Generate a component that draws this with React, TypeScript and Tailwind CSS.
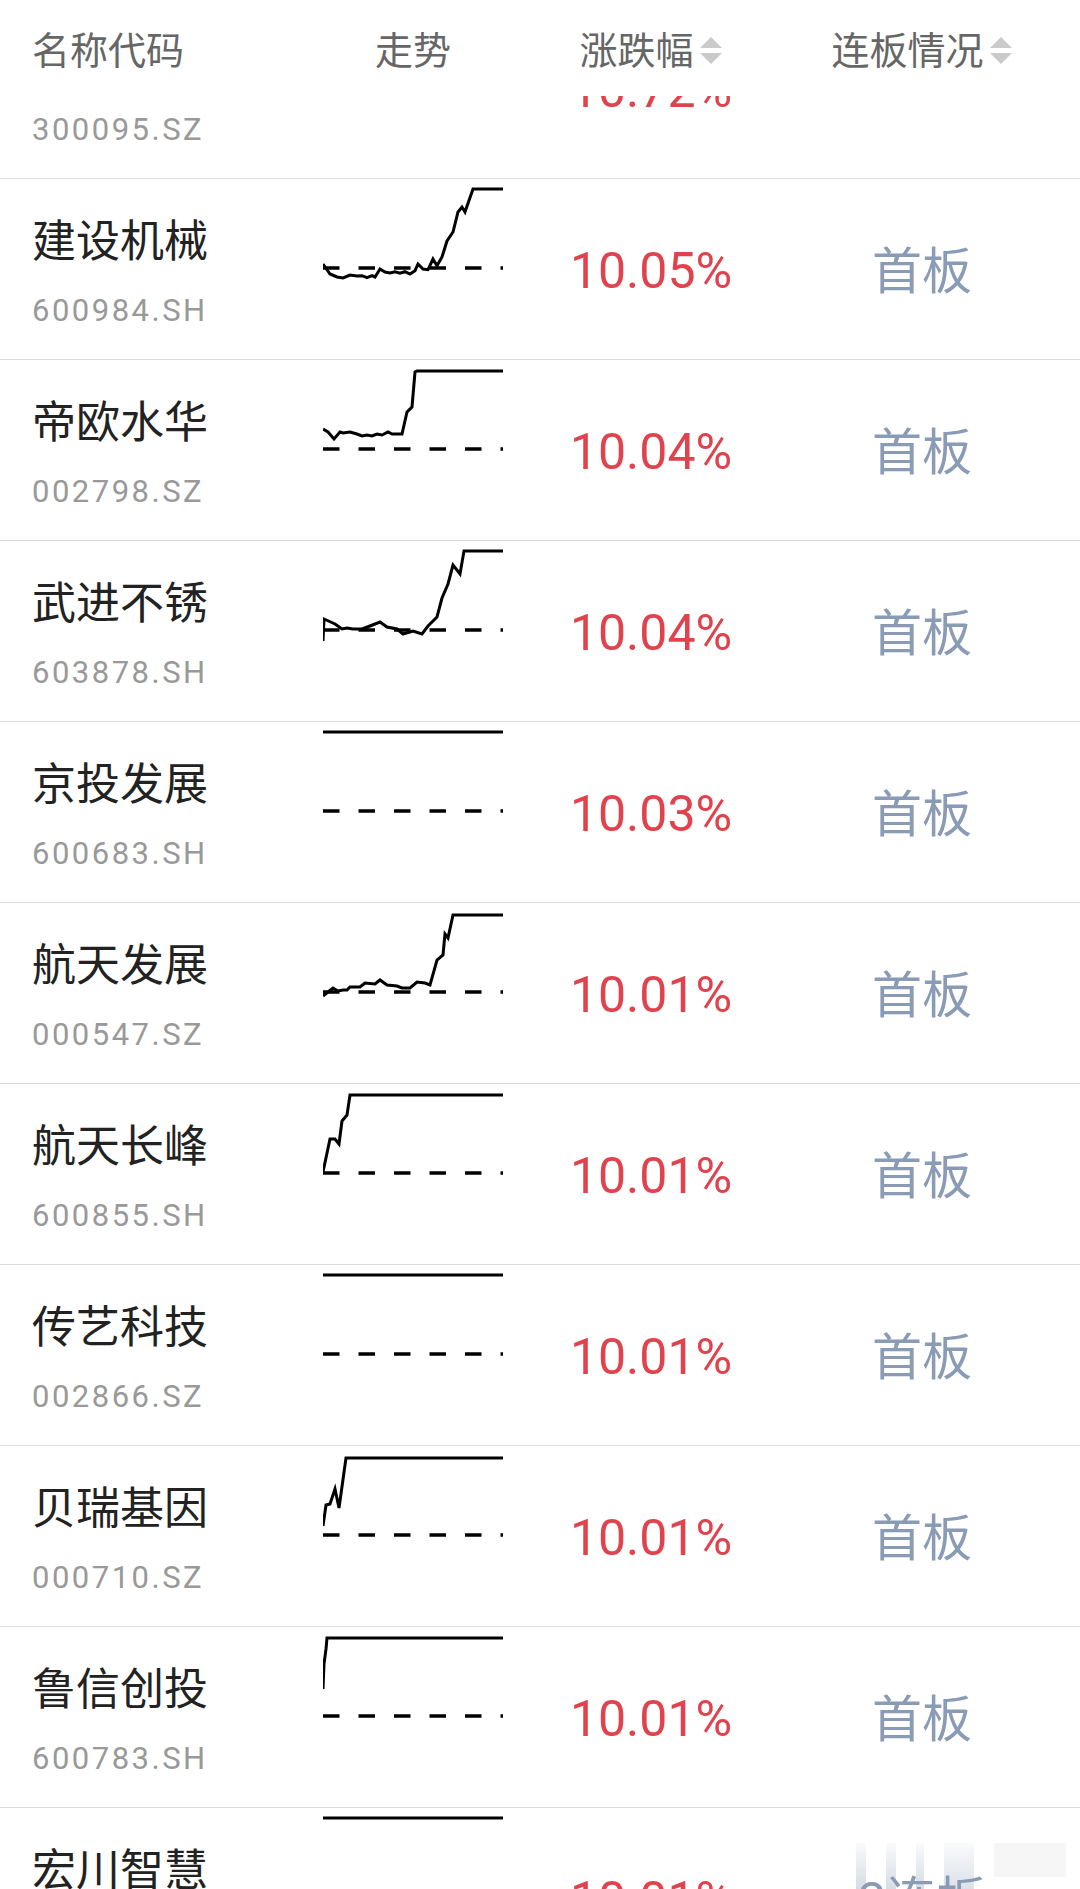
import React from 'react';

type Row = {
  name: string;
  code: string;
  pct: string;
  status: string;
  line: string | null;
};

const FLAT = '0,10 180,10';

const rows: Row[] = [
  { name: '', code: '300095.SZ', pct: '10.72%', status: '', line: null },
  {
    name: '建设机械',
    code: '600984.SH',
    pct: '10.05%',
    status: '首板',
    line: '0,85 7,95 14,98 20,99 27,96 34,97 39,96.7 44,98.7 49,96.7 52,98 57,90 62,93 67,94 72,92.7 77,94.3 82,92.7 87,95 92,91.7 95,85 100,90 105,90.7 110,80 114,86.7 119,78 124,62 130,53 135,33 139,28 142,33 150,10 180,10',
  },
  {
    name: '帝欧水华',
    code: '002798.SZ',
    pct: '10.04%',
    status: '首板',
    line: '0,69 5,72 11,79 17,72 20,73 27,72 34,74 39,76 44,75 49,76 54,74 59,75 65,72 69,74 79,74 84,52 89,47 92,12 94,11 180,11',
  },
  {
    name: '武进不锈',
    code: '603878.SH',
    pct: '10.04%',
    status: '首板',
    line: '0,100 1,78 12,83 19,88 24,87 30,88 39,88 47,85 57,81 64,86 74,88 80,93 90,90 99,93 105,85 114,76 119,57 125,43 130,24 137,33 141,10 180,10',
  },
  { name: '京投发展', code: '600683.SH', pct: '10.03%', status: '首板', line: FLAT },
  {
    name: '航天发展',
    code: '000547.SZ',
    pct: '10.01%',
    status: '首板',
    line: '0,93 5,89 10,85 15,88 20,87 24,87 27,84 37,84 42,80 52,81 57,77 64,82 74,83 79,85 87,85 94,79 102,80 107,82 114,57 120,52 122,31 125,35 130,12 180,12',
  },
  {
    name: '航天长峰',
    code: '600855.SH',
    pct: '10.01%',
    status: '首板',
    line: '0,88 7,55 12,55 16,60 19,37 24,31 27,11 180,11',
  },
  { name: '传艺科技', code: '002866.SZ', pct: '10.01%', status: '首板', line: FLAT },
  {
    name: '贝瑞基因',
    code: '000710.SZ',
    pct: '10.01%',
    status: '首板',
    line: '0,80 3,59 7,58 12,43 16,62 23,12 180,12',
  },
  {
    name: '鲁信创投',
    code: '600783.SH',
    pct: '10.01%',
    status: '首板',
    line: '0,62 1,37 3,22 4,11 180,11',
  },
  { name: '宏川智慧', code: '002930.SZ', pct: '10.01%', status: '2连板', line: FLAT },
];

const Spark: React.FC<{ points: string }> = ({ points }) => (
  <svg width="180" height="110" viewBox="0 0 180 110" className="block">
    <line x1="0" y1="89" x2="180" y2="89" stroke="#000" strokeWidth="3.5" strokeDasharray="16.5 19" />
    <polyline points={points} fill="none" stroke="#000" strokeWidth="3" strokeLinejoin="miter" />
  </svg>
);

const SortArrow: React.FC = () => (
  <svg width="24" height="30" viewBox="0 0 24 30" className="ml-[5px]">
    <polygon points="12,1 23,12 1,12" fill="#cacaca" />
    <polygon points="1,17 23,17 12,28" fill="#cacaca" />
  </svg>
);

export default function App() {
  return (
    <div className="relative w-[1080px] h-[1889px] overflow-hidden bg-white font-['Roboto','Noto_Sans_CJK_SC',sans-serif]">
      {/* list, scrolled slightly so the first row sits under the header */}
      <div className="-mt-[2px]">
        {rows.map((r) => (
          <div key={r.code} className="flex h-[181px] border-b border-[#dcdcdc]">
            <div className="w-[323px] pl-[32px] pt-[37px]">
              <div className="h-[52px] text-[44px] leading-[52px] text-[#222]">{r.name}</div>
              <div className="mt-[25px] text-[31px] leading-[36px] tracking-[2.5px] text-[#999]">{r.code}</div>
            </div>
            <div className="w-[180px]">{r.line && <Spark points={r.line} />}</div>
            <div className="w-[296px] flex items-center justify-center pt-[4px] text-[50px] text-[#e0434d]">
              {r.pct}
            </div>
            <div className="w-[246px] flex items-center justify-center pt-[6px] text-[50px] text-[#8a9bb6]">
              {r.status}
            </div>
          </div>
        ))}
      </div>

      {/* sticky table header */}
      <div className="absolute top-0 left-0 w-full h-[96px] pt-[6px] bg-white flex items-center text-[38px] text-[#666]">
        <div className="w-[323px] pl-[32px]">名称代码</div>
        <div className="w-[180px] text-center">走势</div>
        <div className="w-[296px] flex items-center justify-center">
          涨跌幅
          <SortArrow />
        </div>
        <div className="w-[246px] flex items-center justify-center">
          连板情况
          <SortArrow />
        </div>
      </div>

      {/* faded floating ghost near the bottom right */}
      <div className="absolute top-[1843px] left-[856px] flex gap-[20px] items-stretch h-[46px]">
        <div className="w-[10px] bg-gradient-to-b from-[#8a9bb6]/5 to-[#8a9bb6]/35" />
        <div className="w-[10px] bg-gradient-to-b from-[#8a9bb6]/5 to-[#8a9bb6]/35" />
        <div className="w-[8px] bg-gradient-to-b from-[#8a9bb6]/5 to-[#8a9bb6]/35" />
        <div className="w-[30px] bg-gradient-to-b from-[#8a9bb6]/5 to-[#8a9bb6]/30" />
        <div className="w-[72px] h-[34px] bg-[#f0f0f0]/60" />
      </div>
    </div>
  );
}
